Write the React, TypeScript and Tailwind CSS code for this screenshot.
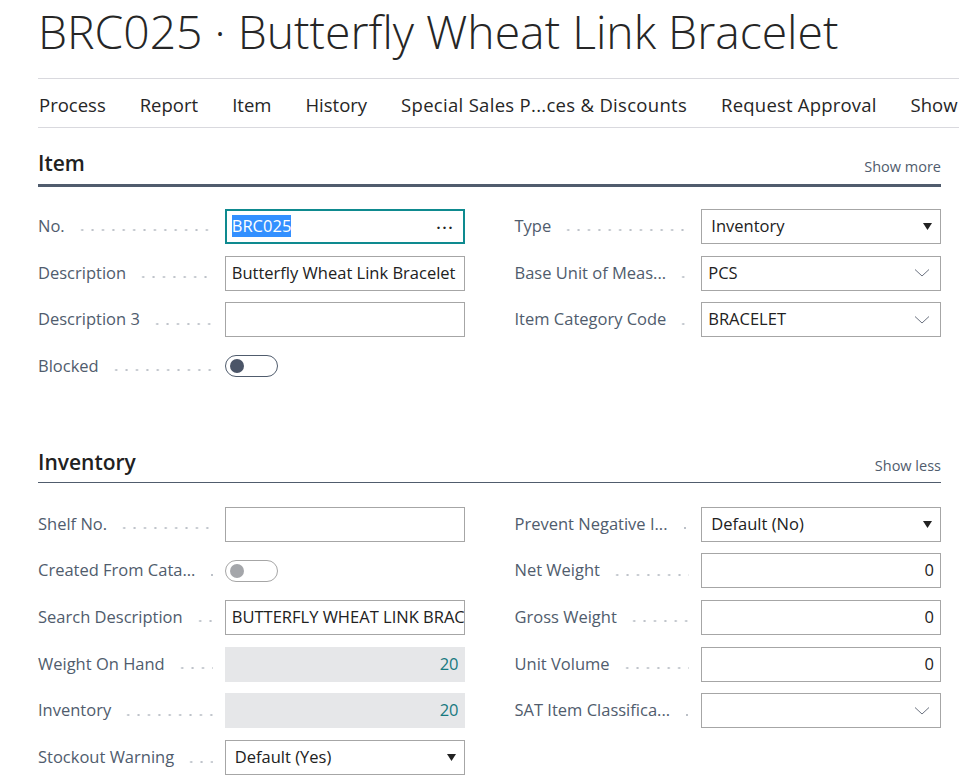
import React from "react";

const FONT = { fontFamily: '"Open Sans", "Noto Sans", sans-serif' };

function Dots() {
  return (
    <span className="flex-1 h-[4px] ml-[12px] mt-[8px] bg-[radial-gradient(circle,#bcc1c8_0.9px,transparent_1.3px)] bg-[length:10.4px_4px] bg-repeat-x bg-left" />
  );
}

function Label({ text }: { text: string }) {
  return (
    <div className="flex items-center w-[175px] mr-[12px] min-w-0">
      <span className="whitespace-nowrap text-[#505c6d] text-[16.5px]">{text}</span>
      <Dots />
    </div>
  );
}

function Chevron() {
  return (
    <svg width="16" height="10" viewBox="0 0 16 10" className="shrink-0">
      <path d="M1 1.5 L8 8 L15 1.5" fill="none" stroke="#6b7280" strokeWidth="1" />
    </svg>
  );
}

function Tri() {
  return (
    <svg width="9" height="7" viewBox="0 0 9 7" className="shrink-0">
      <path d="M0 0 L9 0 L4.5 7 Z" fill="#222" />
    </svg>
  );
}

type Kind =
  | { t: "text"; v: string }
  | { t: "num"; v: string }
  | { t: "ro"; v: string }
  | { t: "select"; v: string }
  | { t: "lookup"; v: string }
  | { t: "toggle"; on?: boolean; disabled?: boolean }
  | { t: "focus"; v: string };

function Field({ k }: { k: Kind }) {
  const base = "w-[240px] h-[35px] flex items-center text-[16.5px]";
  switch (k.t) {
    case "text":
      return (
        <div className={`${base} text-[#212121] border border-[#a6a6a6] px-[6px] overflow-hidden whitespace-nowrap`}>
          {k.v}
        </div>
      );
    case "num":
      return (
        <div className={`${base} text-[#212121] border border-[#a6a6a6] px-[6px] justify-end`}>{k.v}</div>
      );
    case "ro":
      return (
        <div className={`${base} bg-[#e6e7e9] px-[6px] justify-end text-[#16797f]`}>{k.v}</div>
      );
    case "select":
      return (
        <div className={`${base} text-[#212121] border border-[#a6a6a6] pl-[9px] pr-[8px] justify-between`}>
          <span>{k.v}</span>
          <Tri />
        </div>
      );
    case "lookup":
      return (
        <div className={`${base} text-[#212121] border border-[#a6a6a6] pl-[6px] pr-[10px] justify-between`}>
          <span>{k.v}</span>
          <Chevron />
        </div>
      );
    case "focus":
      return (
        <div className={`${base} text-[#212121] border-2 border-[#0e8a8f] pl-[5px] pr-[8px] justify-between`}>
          <span className="bg-[#3390ff] text-white leading-[22px]">{k.v}</span>
          <span className="tracking-[2px] text-[#222] font-bold text-[14px] -mt-[6px]">...</span>
        </div>
      );
    case "toggle":
      return (
        <div className="w-[240px] h-[35px] flex items-center">
          <div
            className={`w-[53px] h-[22px] rounded-full border flex items-center px-[4px] ${
              k.disabled ? "border-[#a6a6a6]" : "border-[#505c6d]"
            }`}
          >
            <div
              className={`w-[14px] h-[14px] rounded-full ${
                k.disabled ? "bg-[#a4a6aa]" : "bg-[#4b5568]"
              }`}
            />
          </div>
        </div>
      );
  }
}

function Row({ label, k }: { label: string; k: Kind }) {
  return (
    <div className="flex items-center h-[46.7px]">
      <Label text={label} />
      <Field k={k} />
    </div>
  );
}

function Section({
  title,
  action,
  thick,
  left,
  right,
}: {
  title: string;
  action: string;
  thick?: boolean;
  left: [string, Kind][];
  right: [string, Kind][];
}) {
  return (
    <div>
      <div
        className={`flex items-end justify-between ${
          thick ? "pb-[6px] border-b-[3px] border-[#505c6d]" : "pb-[5px] border-b border-[#505c6d]"
        }`}
      >
        <span className="text-[21px] font-semibold text-[#212121] leading-[30px]">{title}</span>
        <span className="text-[14.5px] text-[#505c6d] leading-[22px]">{action}</span>
      </div>
      <div className={`grid grid-cols-2 gap-x-[50px] ${thick ? "pt-[16px]" : "pt-[18px]"}`}>
        <div className="flex flex-col">
          {left.map(([l, k]) => (
            <Row key={l} label={l} k={k} />
          ))}
        </div>
        <div className="flex flex-col">
          {right.map(([l, k]) => (
            <Row key={l} label={l} k={k} />
          ))}
        </div>
      </div>
    </div>
  );
}

export default function App() {
  return (
    <div className="w-[959px] h-[781px] overflow-hidden bg-white pl-[38px]" style={FONT}>
      <div className="h-[78px] flex items-start">
        <h1 className="text-[46.3px] font-light text-[#262626] leading-none mt-[9px] whitespace-nowrap">
          BRC025 · Butterfly Wheat Link Bracelet
        </h1>
      </div>
      <div className="h-[50px] border-t border-b border-[#d9d9de] flex items-center gap-[34px] overflow-hidden whitespace-nowrap text-[18.5px] text-[#262626] pl-[1px] pt-[3px]">
        <span>Process</span>
        <span>Report</span>
        <span>Item</span>
        <span>History</span>
        <span className="tracking-[0.3px]">Special Sales P...ces &amp; Discounts</span>
        <span className="tracking-[0.2px]">Request Approval</span>
        <span>Show</span>
      </div>
      <div className="w-[903px] pt-[20px]">
        <Section
          title="Item"
          action="Show more"
          thick
          left={[
            ["No.", { t: "focus", v: "BRC025" }],
            ["Description", { t: "text", v: "Butterfly Wheat Link Bracelet" }],
            ["Description 3", { t: "text", v: "" }],
            ["Blocked", { t: "toggle" }],
          ]}
          right={[
            ["Type", { t: "select", v: "Inventory" }],
            ["Base Unit of Meas...", { t: "lookup", v: "PCS" }],
            ["Item Category Code", { t: "lookup", v: "BRACELET" }],
          ]}
        />
        <div className="h-[57px]" />
        <Section
          title="Inventory"
          action="Show less"
          left={[
            ["Shelf No.", { t: "text", v: "" }],
            ["Created From Cata...", { t: "toggle", disabled: true }],
            ["Search Description", { t: "text", v: "BUTTERFLY WHEAT LINK BRACELET" }],
            ["Weight On Hand", { t: "ro", v: "20" }],
            ["Inventory", { t: "ro", v: "20" }],
            ["Stockout Warning", { t: "select", v: "Default (Yes)" }],
          ]}
          right={[
            ["Prevent Negative I...", { t: "select", v: "Default (No)" }],
            ["Net Weight", { t: "num", v: "0" }],
            ["Gross Weight", { t: "num", v: "0" }],
            ["Unit Volume", { t: "num", v: "0" }],
            ["SAT Item Classifica...", { t: "lookup", v: "" }],
          ]}
        />
      </div>
    </div>
  );
}
